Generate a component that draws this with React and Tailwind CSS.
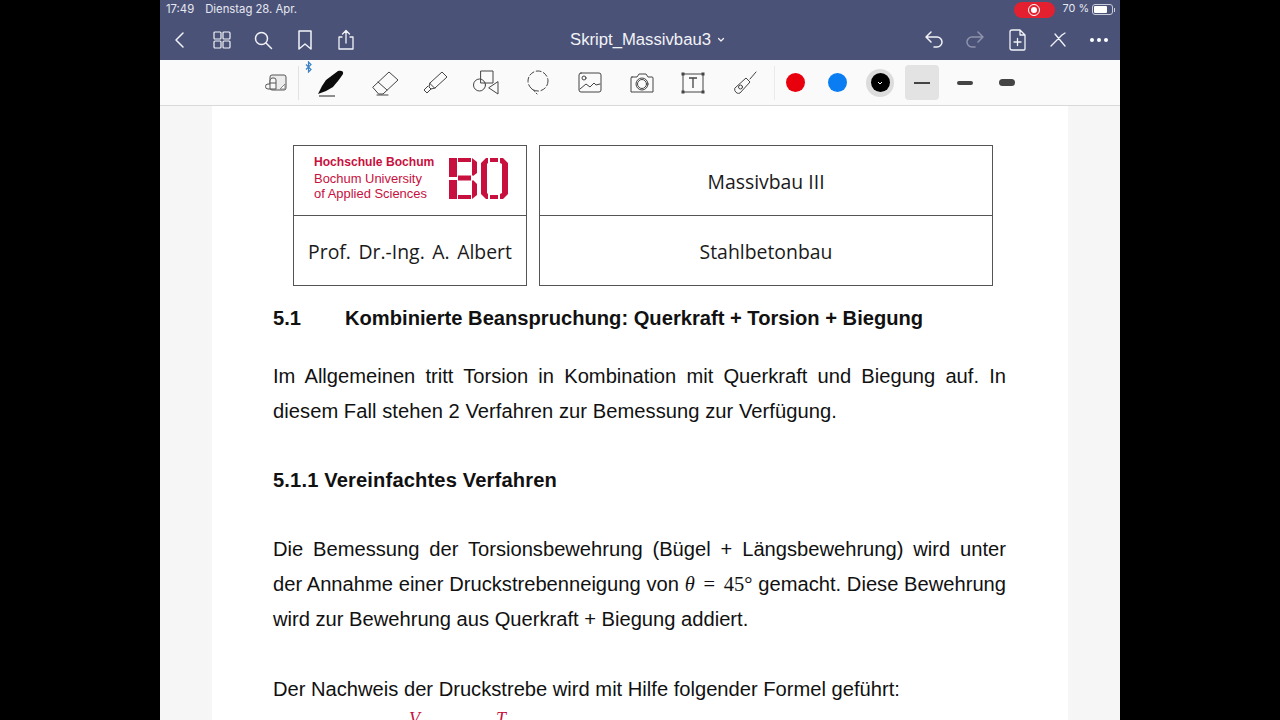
import React from "react";

const sans = "font-['Liberation_Sans',Arial,sans-serif]";

const Stroke = ({ w = 24, h = 24, vb, className = "", sw = 1.5, children }) => (
  <svg width={w} height={h} viewBox={vb || `0 0 ${w} ${h}`} fill="none" stroke="currentColor" strokeWidth={sw} strokeLinecap="round" strokeLinejoin="round" className={className}>
    {children}
  </svg>
);

const Nav = () => (
  <div className="h-[60px] bg-[#4b5278] text-[#f2f3f7] flex flex-col shrink-0">
    <div className="h-[19px] pl-[6px] pr-[5px] flex items-center justify-between text-[#e6e8f0] font-['Inter',sans-serif] text-[11.3px]">
      <div className="flex gap-[11px]">
        <span>17:49</span>
        <span>Dienstag 28. Apr.</span>
      </div>
      <div className="flex items-center gap-[8px] text-[10.8px]">
        <div className="w-[41px] h-[16px] rounded-full bg-[#e3202f] flex items-center justify-center">
          <div className="w-[12px] h-[12px] rounded-full border border-white flex items-center justify-center">
            <div className="w-[6px] h-[6px] rounded-full bg-white" />
          </div>
        </div>
        <span>70 %</span>
        <div className="flex items-center gap-[1px] -ml-[5px]">
          <div className="w-[21px] h-[11px] rounded-[3px] border border-[#c8cbd8] p-[1px]">
            <div className="w-[13px] h-full bg-white rounded-[1px]" />
          </div>
          <div className="w-[1px] h-[4px] bg-[#c8cbd8]" />
        </div>
      </div>
    </div>
    <div className="flex-1 flex items-center relative">
      <div className="flex items-center pl-[12px]">
        <Stroke w={14} h={18}><path d="M11 2 4 9l7 7" /></Stroke>
        <Stroke w={20} h={20} className="ml-[26px]" sw={1.2}>
          <rect x="2" y="2" width="7" height="7" rx="1" />
          <rect x="11" y="2" width="7" height="7" rx="1" />
          <rect x="2" y="11" width="7" height="7" rx="1" />
          <rect x="11" y="11" width="7" height="7" rx="1" />
        </Stroke>
        <Stroke w={20} h={20} className="ml-[21px]"><circle cx="8.5" cy="8.5" r="6" /><path d="m13 13 5.500 5.500" /></Stroke>
        <Stroke w={18} h={22} className="ml-[23px]"><path d="M3 2h12v18l-6-5-6 5z" /></Stroke>
        <Stroke w={20} h={22} className="ml-[22px]" sw={1.3}>
          <path d="M6 8H3v12h14V8h-3M10 14V2M6.500 5 10 1.500 13.500 5" />
        </Stroke>
      </div>
      <div className={`absolute left-[410px] top-[11px] flex items-center gap-[6px] text-[16.7px] leading-[20px] ${sans}`}>
        <span>Skript_Massivbau3</span>
        <Stroke w={8} h={6} sw={1.2}><path d="m1.500 1.500 2.500 2.500 2.500-2.500" /></Stroke>
      </div>
      <div className="ml-auto flex items-center pr-[12px]">
        <Stroke w={20} h={20}><path d="M7 2 2 7l5 5M2 7h11a5 5 0 0 1 0 10h-3" /></Stroke>
        <Stroke w={20} h={20} className="ml-[21px] text-[#8e93ac]"><path d="m13 2 5 5-5 5M18 7H7a5 5 0 0 0 0 10h3" /></Stroke>
        <Stroke w={20} h={22} className="ml-[22px]" sw={1.3}>
          <path d="M3 3a2 2 0 0 1 2-2h8l5 5v14a1 1 0 0 1-1 1H5a2 2 0 0 1-2-2zM13 1v5h5M7 13h7M10.500 9.500v7" />
        </Stroke>
        <Stroke w={18} h={18} className="ml-[22px]" sw={1.3}><path d="m2 15 11-11M6 3l10 12M13 4l3-2" /></Stroke>
        <div className="ml-[23px] flex gap-[3px]">
          <div className="w-[4px] h-[4px] rounded-full bg-white" />
          <div className="w-[4px] h-[4px] rounded-full bg-white" />
          <div className="w-[4px] h-[4px] rounded-full bg-white" />
        </div>
      </div>
    </div>
  </div>
);

const Toolbar = () => (
  <div className="h-[46px] bg-[#fafafa] border-b border-[#d9d9d9] flex items-center text-[#444] shrink-0">
    <svg width="22" height="20" viewBox="0 0 22 20" fill="none" stroke="#555" strokeWidth="1" className="ml-[105px]">
      <rect x="5" y="2" width="16" height="15" rx="2" fill="#ececec" />
      <path d="M20 11v5h-5z" fill="#fff" stroke="#888" />
      <path d="M9 5H7a3 3 0 0 0-2 3v8h6V7a2 2 0 0 0-2-2zM5 11H3a2.500 2.500 0 0 0 0 5h2M5 10h6" fill="#f7f7f7" />
    </svg>
    <div className="w-px h-[34px] bg-[#e2e2e2] ml-[11px]" />
    <div className="relative ml-[18px]">
      <span className="absolute -left-[12px] -top-[8px]">
        <svg width="7" height="12" viewBox="0 0 7 12" fill="none" stroke="#3b82c4" strokeWidth="1.200"><path d="M1 3.500l5 5-2.500 2.500V1L6 3.500l-5 5" /></svg>
      </span>
      <svg width="28" height="28" viewBox="0 0 28 28">
        <path d="M1 25 5 17 9 11 21 2c3-1 6 0 5 3-3 5-7 9-10 13l-7 4z" fill="#0c0c0c" />
        <path d="M2 27h16" stroke="#222" strokeWidth="1" />
      </svg>
    </div>
    <Stroke w={28} h={26} className="ml-[26px]" sw={1}>
      <path d="M2 17 18 2l9 8-15 14H8zM7 12l9 8M6 25h11" />
    </Stroke>
    <Stroke w={26} h={26} className="ml-[23px]" sw={1}>
      <path d="M8 13 20 2l5 5-12 11zM8 13l-1 4 2 2 4-1M6 16l-4 4 3 3 4-4" />
    </Stroke>
    <Stroke w={26} h={26} className="ml-[25px]" sw={1}>
      <rect x="8" y="1" width="12" height="12" />
      <circle cx="6.500" cy="15" r="6" />
      <path d="M25 12v12l-9-6z" />
    </Stroke>
    <Stroke w={24} h={26} className="ml-[27px]" sw={1}>
      <circle cx="12" cy="11" r="10" strokeDasharray="5 2.500" />
      <path d="M6 19c2 1 3 3 5 5" strokeDasharray="4 2" />
    </Stroke>
    <Stroke w={24} h={22} className="ml-[28px]" sw={1}>
      <rect x="1" y="1" width="22" height="19" rx="2" />
      <circle cx="6" cy="6" r="2" />
      <path d="m2 17 6-5 4 3 4-4 2 2 4-1" />
    </Stroke>
    <Stroke w={24} h={22} className="ml-[28px]" sw={1}>
      <path d="M2 5h5l2-3h7l2 3h4a1 1 0 0 1 1 1v14H1V6a1 1 0 0 1 1-1z" />
      <circle cx="12" cy="12" r="6" />
      <circle cx="12" cy="12" r="4.500" />
    </Stroke>
    <svg width="24" height="22" viewBox="0 0 24 22" fill="none" stroke="#444" strokeWidth="1" className="ml-[27px]">
      <rect x="2" y="2" width="20" height="18" />
      <rect x="1" y="1" width="2" height="2" fill="#444" />
      <rect x="21" y="1" width="2" height="2" fill="#444" />
      <rect x="1" y="19" width="2" height="2" fill="#444" />
      <rect x="21" y="19" width="2" height="2" fill="#444" />
      <path d="M8 6h8M12 6v10" strokeWidth="1.300" />
    </svg>
    <Stroke w={26} h={26} className="ml-[27px]" sw={1}>
      <path d="M3 18 14 8l4 4-10 11c-2 1-4 0-5-2zM18 9 24 2" />
      <circle cx="8.500" cy="17" r="2" />
    </Stroke>
    <div className="w-px h-[34px] bg-[#eaeaea] ml-[16px]" />
    <div className="w-[19px] h-[19px] rounded-full bg-[#e8000d] ml-[11px]" />
    <div className="w-[19px] h-[19px] rounded-full bg-[#0a7df2] ml-[23px]" />
    <div className="w-[28px] h-[28px] rounded-full bg-[#dcdcdc] ml-[19px] flex items-center justify-center">
      <div className="w-[19px] h-[19px] rounded-full bg-black flex items-center justify-center">
        <svg width="6" height="4" viewBox="0 0 6 4" fill="none" stroke="#fff" strokeWidth="1"><path d="m1 1 2 2 2-2" /></svg>
      </div>
    </div>
    <div className="w-[34px] h-[35px] rounded-[4px] bg-[#e3e3e3] ml-[11px] flex items-center justify-center">
      <div className="w-[16px] h-[2px] bg-[#444]" />
    </div>
    <div className="w-[16px] h-[4px] rounded-full bg-[#444] ml-[18px]" />
    <div className="w-[16px] h-[7px] rounded-full bg-[#444] ml-[26px]" />
  </div>
);

// HS Bochum mark, blocky B and O with thin gaps between the segments
const BoMark = () => (
  <svg width="59" height="41" viewBox="0 0 59 41" fill="#c8103e" className="-mt-[4px]">
    <path d="M0 0h8v19H0zM0 22h8v19H0z" />
    <path d="M9 0h13v4H9zM9 17.500h13v5H9zM9 37h13v4H9z" />
    <path d="M23 0l5 4v11l-4 3-1-1V0zM23 23l1-1 4 4v11l-5 4z" />
    <path d="M32 5l5-5h2v5l-1 1v29l1 1v5h-2l-5-5z" />
    <path d="M41 0h8v4h-8zM41 37h8v4h-8z" />
    <path d="M51 0h3l5 5v31l-5 5h-3v-5l2-1V6l-2-1z" />
  </svg>
);

const Logo = () => (
  <div className="h-full flex items-center pl-[20px] gap-[14px]">
    <div className={`text-[#c8103e] text-[12.950px] leading-[15.500px] -mt-[4px] w-[121px] ${sans}`}>
      <div className="font-bold text-[12.100px]">Hochschule Bochum</div>
      <div>Bochum University</div>
      <div>of Applied Sciences</div>
    </div>
    <BoMark />
  </div>
);

const Just = ({ children }) => <div className="[text-align:justify] [text-align-last:justify]">{children}</div>;

export default function App() {
  return (
    <div className="h-[720px] w-full bg-black overflow-hidden flex justify-center">
      <div className="w-[960px] h-full flex flex-col">
        <Nav />
        <Toolbar />
        <div className="flex-1 min-h-0 bg-[#f6f6f6] px-[52px] overflow-hidden">
          <div className={`bg-white h-full pl-[61px] pr-[62px] pt-[39px] text-[#111] text-[20.150px] leading-[35px] ${sans}`}>
            <div className="ml-[20px] w-[700px] grid grid-cols-[234px_454px] gap-x-[12px] font-['Open_Sans',sans-serif] text-[19.400px] leading-[24px] text-[#1a1a1a]">
              <div className="border border-[#555]">
                <div className="h-[70px] border-b border-[#555]"><Logo /></div>
                <div className="h-[69px] flex items-center justify-center pt-[2px] [word-spacing:2.500px]">Prof. Dr.-Ing. A. Albert</div>
              </div>
              <div className="border border-[#555]">
                <div className="h-[70px] border-b border-[#555] flex items-center justify-center pt-[2px]">Massivbau III</div>
                <div className="h-[69px] flex items-center justify-center pt-[2px]">Stahlbetonbau</div>
              </div>
            </div>

            <div className="mt-[15px] flex font-bold">
              <span className="w-[72px]">5.1</span>
              <span>Kombinierte Beanspruchung: Querkraft + Torsion + Biegung</span>
            </div>

            <div className="mt-[23px]">
              <Just>Im Allgemeinen tritt Torsion in Kombination mit Querkraft und Biegung auf. In</Just>
              <div className="tracking-[0.05px]">diesem Fall stehen 2 Verfahren zur Bemessung zur Verfügung.</div>
            </div>

            <div className="mt-[34px] font-bold tracking-[0.14px]">5.1.1 Vereinfachtes Verfahren</div>

            <div className="mt-[34px]">
              <Just>Die Bemessung der Torsionsbewehrung (Bügel + Längsbewehrung) wird unter</Just>
              <Just>
                der Annahme einer Druckstrebenneigung von{" "}
                <span className="font-['Liberation_Serif',serif] text-[20.500px] [word-spacing:3.500px]"><i>θ</i> = 45°</span> gemacht. Diese Bewehrung
              </Just>
              <div>wird zur Bewehrung aus Querkraft + Biegung addiert.</div>
            </div>

            <div className="mt-[35px]">Der Nachweis der Druckstrebe wird mit Hilfe folgender Formel geführt:</div>

            <div className="font-['Liberation_Serif',serif] italic text-[#c8103e] text-[18px] leading-[18px] pt-[3px] pl-[136px] flex gap-[76px]">
              <span>V</span>
              <span>T</span>
            </div>
          </div>
        </div>
      </div>
    </div>
  );
}
